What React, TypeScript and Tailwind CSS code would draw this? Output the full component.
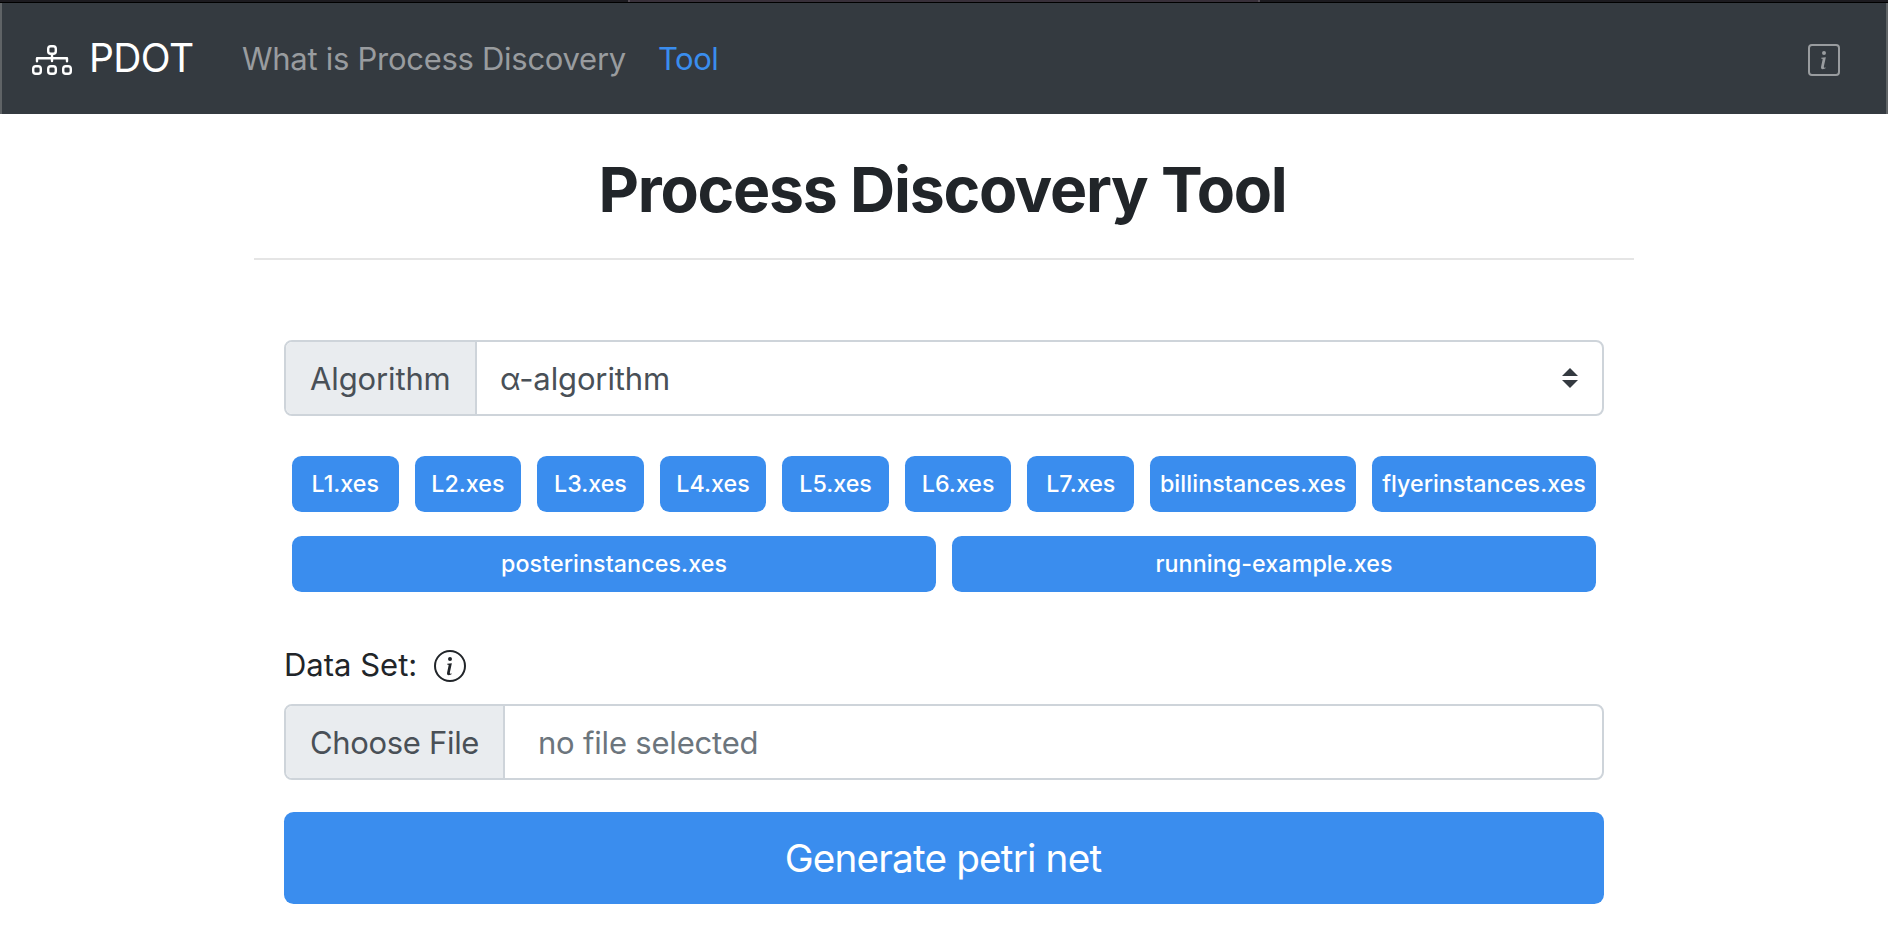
import { BsInfoCircle, BsInfoSquare } from "react-icons/bs";

function DiagramIcon() {
  return (
    <svg
      width="40"
      height="30"
      viewBox="0 0 40 30"
      fill="none"
      stroke="currentColor"
      strokeWidth="2.4"
      strokeLinecap="round"
      strokeLinejoin="round"
      className="shrink-0"
    >
      <rect x="16.2" y="1.2" width="7.6" height="7.6" rx="2.6" />
      <path d="M20 9.5V16M5 16.2V13.3H35V16.2" />
      <rect x="1.2" y="21.2" width="7.6" height="7.6" rx="2.6" />
      <rect x="16.2" y="21.2" width="7.6" height="7.6" rx="2.6" />
      <rect x="31.2" y="21.2" width="7.6" height="7.6" rx="2.6" />
    </svg>
  );
}

function SelectArrows() {
  return (
    <svg width="16" height="20" viewBox="0 0 16 20" fill="#343a40">
      <path d="M8 0l8 8H0zM8 20l8-8H0z" />
    </svg>
  );
}

const smallFiles = ["L1.xes", "L2.xes", "L3.xes", "L4.xes", "L5.xes", "L6.xes", "L7.xes"];
const wideFiles = ["posterinstances.xes", "running-example.xes"];

const fileButton =
  "flex h-14 items-center justify-center rounded-[9.6px] bg-[#3a8dee] pb-px text-[23.25px] leading-none font-medium text-white";

export default function App() {
  return (
    <div className="h-[932px] w-[1888px] overflow-hidden bg-white font-['Inter','Liberation_Sans',sans-serif] font-[430] text-[#212529]">
      <header>
        <div className="flex h-0.5 bg-[#1c1b20]">
          <div className="ml-[628px] w-[632px] border-x-2 border-[#524b54] bg-[#38303a]" />
        </div>
        <div className="h-px bg-black" />
        <nav className="flex h-[111px] items-center border-x-2 border-[#5f6366] bg-[#343a40] pr-[46px] pl-[30px]">
          <div className="flex items-center text-white">
            <div className="pt-[3px]">
              <DiagramIcon />
            </div>
            <span className="ml-[17px] w-[102px] pb-0.5 text-[39px] leading-none tracking-[-0.6px] whitespace-nowrap">
              PDOT
            </span>
          </div>
          <a className="ml-[51px] w-[416px] text-[31px] leading-none tracking-[-0.28px] whitespace-nowrap text-[#999c9f]">
            What is Process Discovery
          </a>
          <a className="text-[31px] leading-none tracking-[-0.5px] text-[#3a8dee]">Tool</a>
          <BsInfoSquare size={32} className="mt-[3px] ml-auto text-[#999c9f]" />
        </nav>
      </header>

      <main className="mx-auto w-[1380px]">
        <div className="flex h-[146px] items-center justify-center border-b-2 border-[#e5e5e5] pr-[3px]">
          <h1 className="pt-[7px] text-[62.5px] leading-none font-bold tracking-[-1.25px] whitespace-nowrap">
            Process Discovery Tool
          </h1>
        </div>

        <div className="px-[30px] pt-20">
          <div className="flex h-[76px] overflow-hidden rounded-lg border-2 border-[#ced4da] text-[31px] leading-none tracking-[-0.13px] text-[#495057]">
            <div className="flex w-[191px] shrink-0 items-center border-r-2 border-[#ced4da] bg-[#e9ecef] pl-[24px]">
              Algorithm
            </div>
            <div className="flex flex-1 items-center justify-between pr-6 pl-[23px]">
              <span>α-algorithm</span>
              <SelectArrows />
            </div>
          </div>

          <div className="mt-10 flex gap-4 px-2">
            {smallFiles.map((name) => (
              <button key={name} className={`${fileButton} flex-1`}>
                {name}
              </button>
            ))}
            <button className={`${fileButton} w-[206px] tracking-[0.09px]`}>billinstances.xes</button>
            <button className={`${fileButton} w-[224px]`}>flyerinstances.xes</button>
          </div>
          <div className="mt-6 flex gap-4 px-2">
            {wideFiles.map((name) => (
              <button key={name} className={`${fileButton} flex-1 tracking-[0.09px]`}>
                {name}
              </button>
            ))}
          </div>

          <div className="mt-[58px] flex h-8 items-center">
            <span className="w-[150px] pb-[3px] text-[31px] leading-none">Data Set:</span>
            <BsInfoCircle size={32} />
          </div>

          <div className="mt-[22px] flex h-[76px] overflow-hidden rounded-lg border-2 border-[#ced4da] text-[31px] leading-none">
            <div className="flex w-[219px] shrink-0 items-center border-r-2 border-[#ced4da] bg-[#e9ecef] pl-[24px] tracking-[-0.33px] text-[#495057]">
              Choose File
            </div>
            <div className="flex items-center pl-[33px] tracking-[-0.2px] text-[#6c757d]">no file selected</div>
          </div>

          <button className="mt-8 flex h-[92px] w-full items-center justify-center rounded-[9.6px] bg-[#3a8dee] pr-0.5 text-[38.75px] leading-none tracking-[-0.85px] text-white">
            Generate petri net
          </button>
        </div>
      </main>
    </div>
  );
}
